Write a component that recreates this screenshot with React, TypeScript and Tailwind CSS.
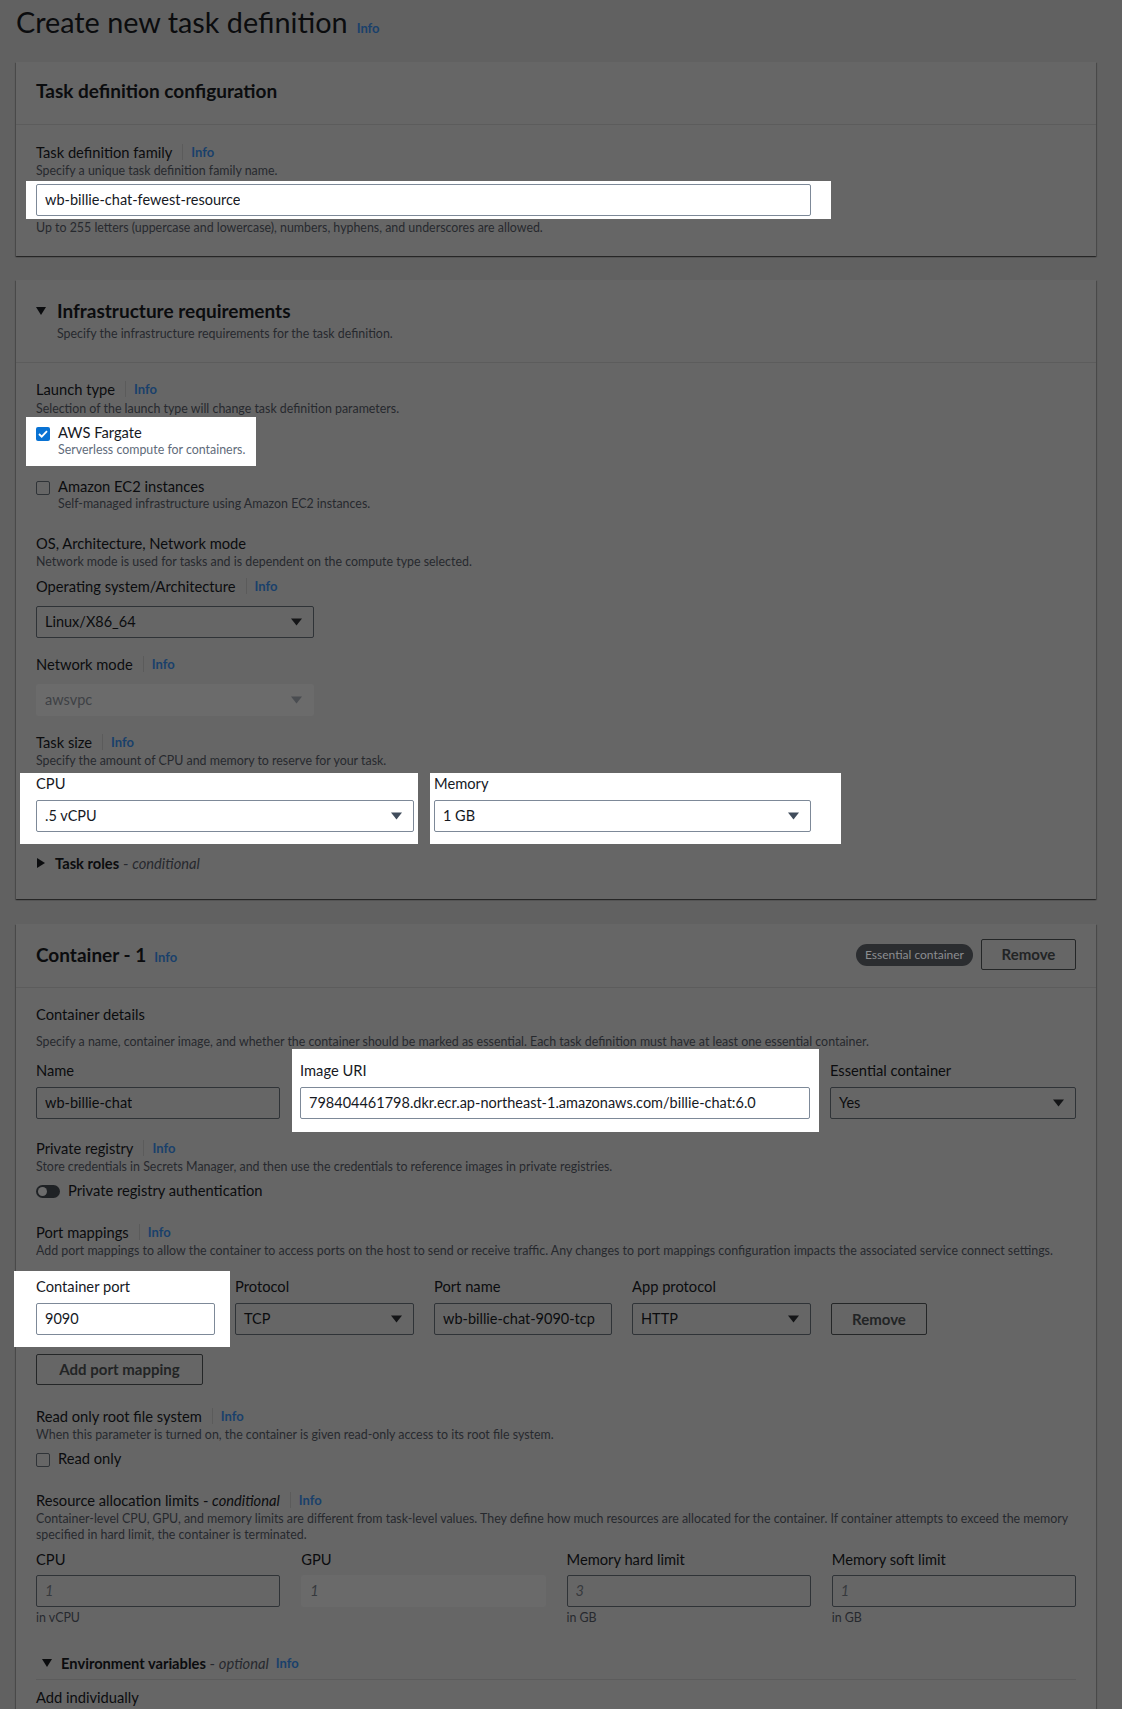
import React from "react";

type Kids = { children?: React.ReactNode };

function Info({ className = "" }: { className?: string }) {
  return <span className={`text-[13px] font-bold leading-4 text-[#19406b] ${className}`}>Info</span>;
}

function FieldLabel({
  children,
  info = false,
  lit = false,
  className = "",
}: Kids & { info?: boolean; lit?: boolean; className?: string }) {
  return (
    <div className={`flex h-5 items-center text-[14.7px] leading-5 ${lit ? "text-[#16191f]" : "text-[#0b0c0e]"} ${className}`}>
      <span>{children}</span>
      {info && (
        <>
          <span className="ml-[10px] mr-[8px] h-[16px] w-px bg-[#5b5b5b]" />
          <Info />
        </>
      )}
    </div>
  );
}

function Desc({ children, lit = false, className = "" }: Kids & { lit?: boolean; className?: string }) {
  return (
    <p className={`text-[12.4px] leading-4 ${lit ? "text-[#5f6b7a]" : "text-[#26292e]"} ${className}`}>{children}</p>
  );
}

function Caret({ color }: { color: string }) {
  return (
    <svg width="11" height="8" viewBox="0 0 11 8" className="shrink-0">
      <path d="M0 0.5h11L5.5 7.5z" fill={color} />
    </svg>
  );
}

function TextBox({
  value,
  lit = false,
  placeholder = false,
  disabled = false,
  className = "",
}: {
  value: string;
  lit?: boolean;
  placeholder?: boolean;
  disabled?: boolean;
  className?: string;
}) {
  const tone = disabled
    ? "border-transparent bg-[#6a6a6a]"
    : lit
      ? "border-[#7d8998] bg-white"
      : "border-[#2f3337]";
  const text = placeholder ? "italic text-[#36393d]" : lit ? "text-[#16191f]" : "text-[#0b0c0e]";
  return (
    <div className={`flex h-[32px] items-center rounded-[2px] border px-2 text-[14.5px] ${tone} ${text} ${className}`}>
      <span className="truncate">{value}</span>
    </div>
  );
}

function SelectBox({
  value,
  lit = false,
  disabled = false,
  className = "",
}: {
  value: string;
  lit?: boolean;
  disabled?: boolean;
  className?: string;
}) {
  const tone = disabled
    ? "border-transparent bg-[#6b6b6b] text-[#3e4145]"
    : lit
      ? "border-[#7d8998] bg-white text-[#16191f]"
      : "border-[#2f3337] text-[#0b0c0e]";
  return (
    <div className={`flex h-[32px] items-center justify-between rounded-[2px] border pl-2 pr-[11px] text-[14.5px] ${tone} ${className}`}>
      <span>{value}</span>
      <Caret color={disabled ? "#4a4d51" : lit ? "#414d5c" : "#141517"} />
    </div>
  );
}

function Checkbox({ checked = false }: { checked?: boolean }) {
  if (checked) {
    return (
      <span className="mt-[5px] flex h-[14px] w-[14px] shrink-0 items-center justify-center rounded-[2px] bg-[#0972d3]">
        <svg width="10" height="8" viewBox="0 0 10 8">
          <path d="M1 4l2.7 2.7L9 1.2" fill="none" stroke="white" strokeWidth="1.8" />
        </svg>
      </span>
    );
  }
  return <span className="mt-[5px] h-[14px] w-[14px] shrink-0 rounded-[2px] border-[1.5px] border-[#2f3337]" />;
}

function Option({
  title,
  sub,
  checked = false,
  lit = false,
}: {
  title: string;
  sub?: string;
  checked?: boolean;
  lit?: boolean;
}) {
  return (
    <div className="flex gap-2">
      <Checkbox checked={checked} />
      <div>
        <div className={`text-[14.7px] leading-5 ${lit ? "text-[#16191f]" : "text-[#0b0c0e]"}`}>{title}</div>
        {sub && <Desc lit={lit}>{sub}</Desc>}
      </div>
    </div>
  );
}

function Card({ children, className = "" }: Kids & { className?: string }) {
  return (
    <section
      className={`w-[1080px] bg-[#666666] shadow-[0_1px_1px_0_rgba(0,0,0,0.4),1px_1px_1px_0_rgba(0,0,0,0.18),-1px_1px_1px_0_rgba(0,0,0,0.18)] ${className}`}
    >
      {children}
    </section>
  );
}

function Heading({ children }: Kids) {
  return <h2 className="text-[19px] font-bold leading-6 text-[#0b0c0e]">{children}</h2>;
}

function DarkButton({ children, className = "" }: Kids & { className?: string }) {
  return (
    <div
      className={`flex items-center justify-center rounded-[2px] border border-[#242627] text-[15px] font-bold text-[#222425] ${className}`}
    >
      {children}
    </div>
  );
}

function TriangleDown({ className = "" }: { className?: string }) {
  return (
    <svg width="10" height="8" viewBox="0 0 10 8" className={className}>
      <path d="M0 0h10L5 8z" fill="#0b0c0e" />
    </svg>
  );
}

function TriangleRight({ className = "" }: { className?: string }) {
  return (
    <svg width="8" height="10" viewBox="0 0 8 10" className={className}>
      <path d="M0 0l8 5-8 5z" fill="#0b0c0e" />
    </svg>
  );
}

export default function App() {
  return (
    <div className="min-h-screen bg-[#616161] pb-16 pl-4 pr-[26px] font-['Lato',sans-serif]">
      <div className="flex items-baseline gap-[9px] pt-1">
        <h1 className="text-[28.8px] leading-9 text-[#0b0c0e]">Create new task definition</h1>
        <Info />
      </div>

      {/* Task definition configuration */}
      <Card className="mt-[22px]">
        <div className="border-b border-[#5c5c5c] px-5 pb-[21px] pt-[17px]">
          <Heading>Task definition configuration</Heading>
        </div>
        <div className="px-5 pb-[20px] pt-[17px]">
          <FieldLabel info>Task definition family</FieldLabel>
          <Desc className="mt-px">Specify a unique task definition family name.</Desc>
          <div className="-ml-[10px] mt-[2px] w-fit bg-white pb-[3px] pl-[10px] pr-[20px] pt-[3px]">
            <TextBox lit value="wb-billie-chat-fewest-resource" className="w-[775px]" />
          </div>
          <Desc className="mt-px">Up to 255 letters (uppercase and lowercase), numbers, hyphens, and underscores are allowed.</Desc>
        </div>
      </Card>

      {/* Infrastructure requirements */}
      <Card className="mt-[24px]">
        <div className="border-b border-[#5c5c5c] px-5 pb-[20px] pt-[19px]">
          <div className="flex items-center">
            <TriangleDown className="mr-[11px]" />
            <Heading>Infrastructure requirements</Heading>
          </div>
          <Desc className="mt-[3px] pl-[21px]">Specify the infrastructure requirements for the task definition.</Desc>
        </div>
        <div className="px-5 pb-[26px] pt-[16px]">
          <FieldLabel info>Launch type</FieldLabel>
          <Desc className="mt-[2px]">Selection of the launch type will change task definition parameters.</Desc>
          <div className="-ml-[10px] w-fit bg-white pb-[8px] pl-[10px] pr-[11px] pt-[5px]">
            <Option lit checked title="AWS Fargate" sub="Serverless compute for containers." />
          </div>
          <div className="mt-[10px]">
            <Option title="Amazon EC2 instances" sub="Self-managed infrastructure using Amazon EC2 instances." />
          </div>

          <FieldLabel className="mt-[21px]">OS, Architecture, Network mode</FieldLabel>
          <Desc className="mt-px">Network mode is used for tasks and is dependent on the compute type selected.</Desc>

          <FieldLabel info className="mt-[6px]">Operating system/Architecture</FieldLabel>
          <SelectBox value="Linux/X86_64" className="mt-[10px] w-[278px]" />

          <FieldLabel info className="mt-[16px]">Network mode</FieldLabel>
          <SelectBox disabled value="awsvpc" className="mt-[10px] w-[278px]" />

          <FieldLabel info className="mt-[16px]">Task size</FieldLabel>
          <Desc className="mt-px">Specify the amount of CPU and memory to reserve for your task.</Desc>
          <div className="-ml-4 mt-[4px] flex">
            <div className="bg-white pb-[12px] pl-4 pr-1">
              <FieldLabel lit>CPU</FieldLabel>
              <SelectBox lit value=".5 vCPU" className="mt-[7px] w-[378px]" />
            </div>
            <div className="ml-3 bg-white pb-[12px] pl-1 pr-[30px]">
              <FieldLabel lit>Memory</FieldLabel>
              <SelectBox lit value="1 GB" className="mt-[7px] w-[377px]" />
            </div>
          </div>

          <div className="mt-[9px] flex items-center text-[14.7px] leading-5 text-[#0b0c0e]">
            <TriangleRight className="ml-px mr-[10px]" />
            <span className="font-bold">Task roles</span>
            <span className="text-[#26292e]">&nbsp;-&nbsp;</span>
            <span className="italic text-[#26292e]">conditional</span>
          </div>
        </div>
      </Card>

      {/* Container - 1 */}
      <Card className="mt-[25px]">
        <div className="flex items-center justify-between border-b border-[#5c5c5c] px-5 pb-[17px] pt-[15px]">
          <div className="flex items-baseline gap-2">
            <Heading>Container - 1</Heading>
            <Info />
          </div>
          <div className="flex items-center gap-2">
            <span className="flex h-[22px] items-center rounded-full bg-[#2b2d30] px-[9px] text-[12px] text-[#8b8d90]">
              Essential container
            </span>
            <DarkButton className="h-[31px] w-[95px]">Remove</DarkButton>
          </div>
        </div>

        <div className="px-5 pb-24 pt-[16px]">
          <FieldLabel>Container details</FieldLabel>
          <Desc className="mt-[10px]">
            Specify a name, container image, and whether the container should be marked as essential. Each task definition
            must have at least one essential container.
          </Desc>

          <div className="mt-[10px] grid grid-cols-[244px_510px_1fr] gap-x-5">
            <div>
              <FieldLabel>Name</FieldLabel>
              <TextBox value="wb-billie-chat" className="mt-[7px]" />
            </div>
            <div className="-mb-[13px] -ml-2 -mr-[9px] -mt-[11px] bg-white pb-[13px] pl-2 pr-[9px] pt-[11px]">
              <FieldLabel lit>Image URI</FieldLabel>
              <TextBox lit value="798404461798.dkr.ecr.ap-northeast-1.amazonaws.com/billie-chat:6.0" className="mt-[7px]" />
            </div>
            <div>
              <FieldLabel>Essential container</FieldLabel>
              <SelectBox value="Yes" className="mt-[7px]" />
            </div>
          </div>

          <FieldLabel info className="mt-[19px]">Private registry</FieldLabel>
          <Desc className="mt-px">
            Store credentials in Secrets Manager, and then use the credentials to reference images in private registries.
          </Desc>
          <div className="mt-[5px] flex items-center gap-2">
            <span className="mt-[2px] flex h-[13px] w-[24px] items-center rounded-full bg-[#1f2225] px-[2px]">
              <span className="h-[9px] w-[9px] rounded-full bg-[#6c6c6c]" />
            </span>
            <span className="text-[14.7px] leading-5 text-[#0b0c0e]">Private registry authentication</span>
          </div>

          <FieldLabel info className="mt-[22px]">Port mappings</FieldLabel>
          <Desc className="mt-px">
            Add port mappings to allow the container to access ports on the host to send or receive traffic. Any changes to
            port mappings configuration impacts the associated service connect settings.
          </Desc>
          <div className="mt-[17px] grid grid-cols-[179px_179px_178px_179px_96px] gap-x-5">
            <div className="-mb-[12px] -ml-[22px] -mr-[15px] -mt-[5px] bg-white pb-[12px] pl-[22px] pr-[15px] pt-[5px]">
              <FieldLabel lit>Container port</FieldLabel>
              <TextBox lit value="9090" className="mt-[7px]" />
            </div>
            <div>
              <FieldLabel>Protocol</FieldLabel>
              <SelectBox value="TCP" className="mt-[7px]" />
            </div>
            <div>
              <FieldLabel>Port name</FieldLabel>
              <TextBox value="wb-billie-chat-9090-tcp" className="mt-[7px]" />
            </div>
            <div>
              <FieldLabel>App protocol</FieldLabel>
              <SelectBox value="HTTP" className="mt-[7px]" />
            </div>
            <DarkButton className="h-[32px] self-end">Remove</DarkButton>
          </div>
          <DarkButton className="mt-[19px] h-[31px] w-[167px]">Add port mapping</DarkButton>

          <FieldLabel info className="mt-[21px]">Read only root file system</FieldLabel>
          <Desc className="mt-px">
            When this parameter is turned on, the container is given read-only access to its root file system.
          </Desc>
          <div className="mt-[5px]">
            <Option title="Read only" />
          </div>

          <FieldLabel info className="mt-[22px]">
            Resource allocation limits - <span className="italic">conditional</span>
          </FieldLabel>
          <Desc className="mt-px">
            Container-level CPU, GPU, and memory limits are different from task-level values. They define how much
            resources are allocated for the container. If container attempts to exceed the memory specified in hard limit,
            the container is terminated.
          </Desc>
          <div className="mt-[6px] grid grid-cols-4 gap-x-[21px]">
            <div>
              <FieldLabel>CPU</FieldLabel>
              <TextBox placeholder value="1" className="mt-[6px]" />
              <Desc className="mt-[3px]">in vCPU</Desc>
            </div>
            <div>
              <FieldLabel>GPU</FieldLabel>
              <TextBox placeholder disabled value="1" className="mt-[6px]" />
            </div>
            <div>
              <FieldLabel>Memory hard limit</FieldLabel>
              <TextBox placeholder value="3" className="mt-[6px]" />
              <Desc className="mt-[3px]">in GB</Desc>
            </div>
            <div>
              <FieldLabel>Memory soft limit</FieldLabel>
              <TextBox placeholder value="1" className="mt-[6px]" />
              <Desc className="mt-[3px]">in GB</Desc>
            </div>
          </div>

          <div className="mt-[27px] border-b border-[#5c5c5c] pb-[6px]">
            <div className="flex items-center pl-[6px] text-[14.7px] leading-5">
              <TriangleDown className="mr-[9px]" />
              <span className="font-bold text-[#0b0c0e]">Environment variables</span>
              <span className="text-[#26292e]">&nbsp;-&nbsp;</span>
              <span className="italic text-[#26292e]">optional</span>
              <Info className="ml-[7px]" />
            </div>
          </div>
          <FieldLabel className="mt-[7px]">Add individually</FieldLabel>
        </div>
      </Card>
    </div>
  );
}
